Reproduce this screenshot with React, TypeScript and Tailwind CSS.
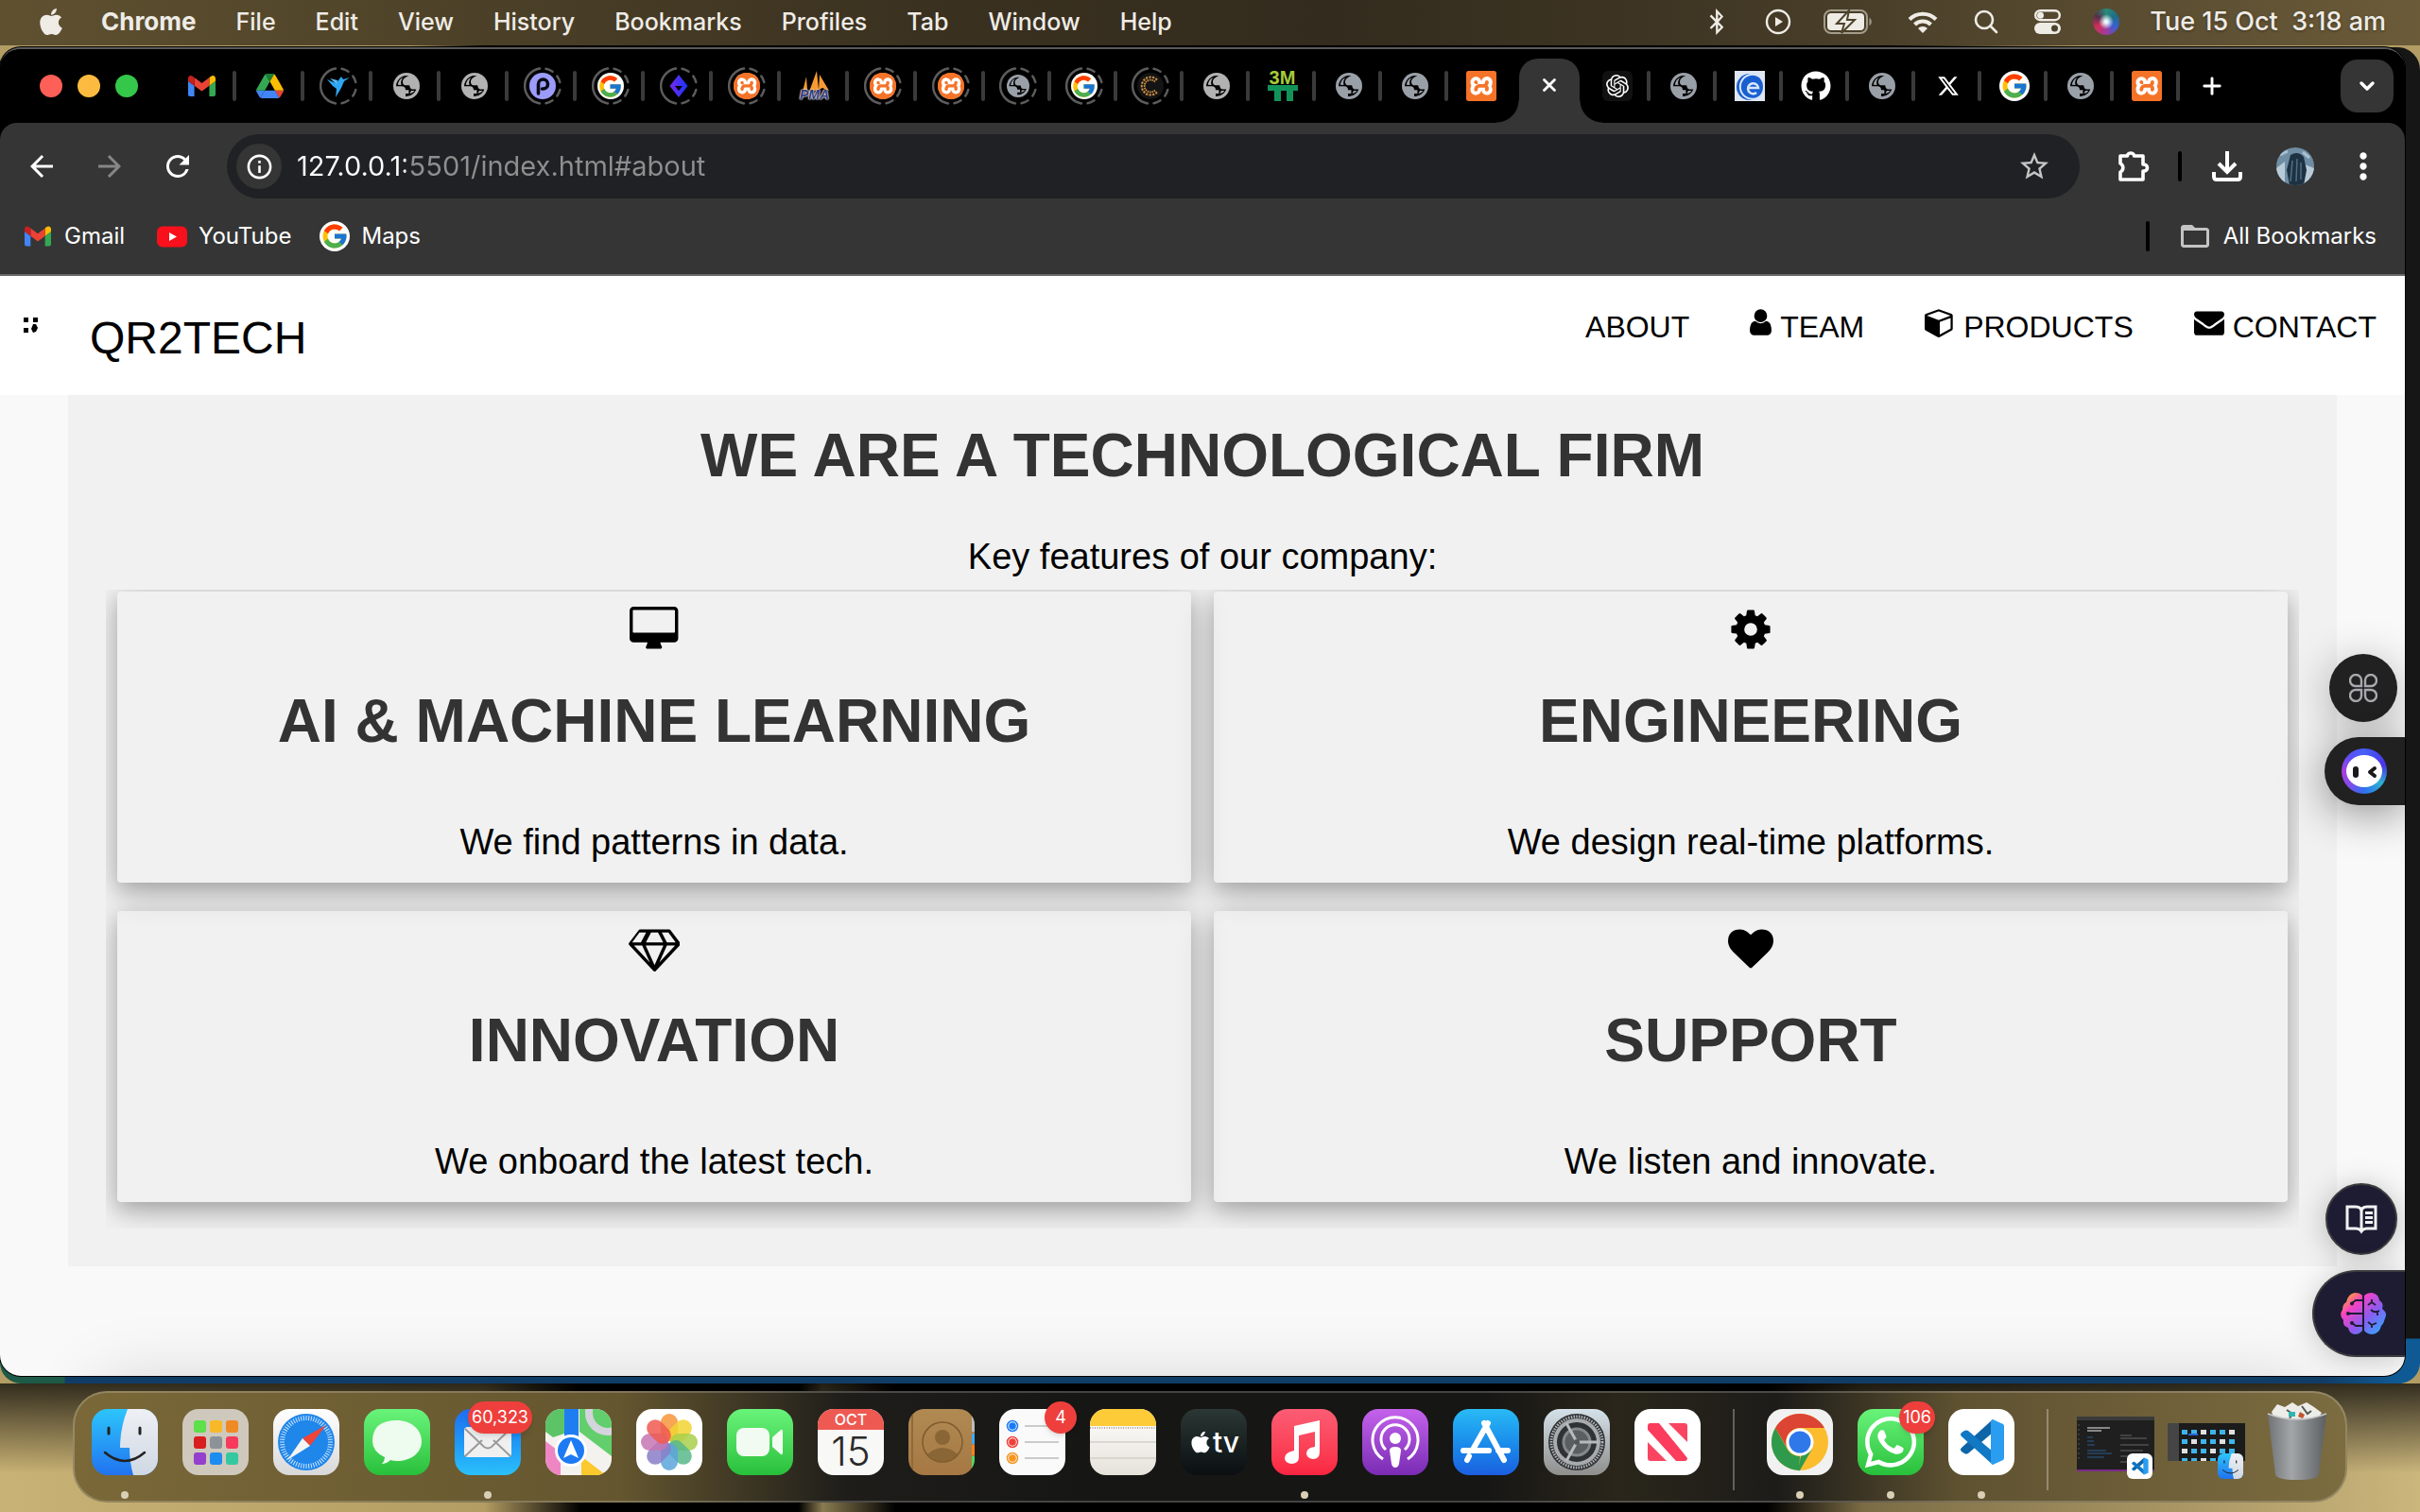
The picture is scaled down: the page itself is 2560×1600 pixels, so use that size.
import type { ReactNode } from "react";
import { FaApple, FaBluetoothB, FaGithub, FaWhatsapp, FaXTwitter } from "react-icons/fa6";
import { FcGoogle } from "react-icons/fc";
import { SiOpenai, SiXampp } from "react-icons/si";
import {
  MdArrowBack,
  MdArrowForward,
  MdInfoOutline,
  MdMoreVert,
  MdFolderOpen,
  MdRefresh,
  MdStarBorder,
} from "react-icons/md";
import { ChevronDown, Plus, X } from "lucide-react";

/* ---------- Brand marks ---------- */

function GmailMark({ className }: { className: string }) {
  return (
    <svg viewBox="52 42 88 66" className={className} aria-hidden="true">
      <path fill="#4285f4" d="M58 108h14V74L52 59v43c0 3.32 2.69 6 6 6" />
      <path fill="#34a853" d="M120 108h14c3.32 0 6-2.69 6-6V59l-20 15" />
      <path fill="#fbbc04" d="M120 48v26l20-15v-8c0-7.42-8.47-11.65-14.4-7.2" />
      <path fill="#ea4335" d="M72 74V48l24 18 24-18v26L96 92" />
      <path fill="#c5221f" d="M52 51v8l20 15V48l-5.6-4.2c-5.94-4.45-14.4-.22-14.4 7.2" />
    </svg>
  );
}

function DriveMark() {
  return (
    <svg viewBox="0 0 87.3 78" className="w-[29px] h-[26px]" aria-hidden="true">
      <path d="m6.6 66.85 3.85 6.65c.8 1.4 1.95 2.5 3.3 3.3l13.75-23.8h-27.5c0 1.55.4 3.1 1.2 4.5z" fill="#4285f4" />
      <path d="m43.65 25-13.75-23.8c-1.35.8-2.5 1.9-3.3 3.3l-25.4 44a9.06 9.06 0 0 0 -1.2 4.5h27.5z" fill="#34a853" />
      <path d="m73.55 76.8c1.35-.8 2.5-1.9 3.3-3.3l1.6-2.75 7.65-13.25c.8-1.4 1.2-2.95 1.2-4.5h-27.502l5.852 11.5z" fill="#ea4335" />
      <path d="m43.65 25 13.75-23.8c-1.35-.8-2.9-1.2-4.5-1.2h-18.5c-1.6 0-3.15.45-4.5 1.2z" fill="#188038" />
      <path d="m59.8 53h-32.3l-13.75 23.8c1.35.8 2.9 1.2 4.5 1.2h50.8c1.6 0 3.15-.45 4.5-1.2z" fill="#4285f4" />
      <path d="m73.4 26.5-12.7-22c-.8-1.4-1.95-2.5-3.3-3.3l-13.75 23.8 16.15 28h27.45c0-1.55-.4-3.1-1.2-4.5z" fill="#fbbc04" />
    </svg>
  );
}

function Globe({ tone, small }: { tone: "gray" | "blue"; small?: boolean }) {
  const fill = tone === "gray" ? "#b2b2b2" : "#9aa0a8";
  return (
    <svg viewBox="0 0 28 28" className={small ? "size-6" : "size-7"} aria-hidden="true">
      <circle cx="14" cy="14" r="14" fill={fill} />
      <path
        d="M16.500 3.200c-3.500 1-6.500 3.200-6.500 6.500 0 2.600 1.600 3.600 4 3.600h3.200c.3 2.600 1.200 4.200 3.300 4.200h3.800c-1.600 4.500-6 7.600-11.300 7.400v-3h3.400v-3.600h-3.400c0-2.600-1.400-4-4-4H3c.2-5.500 4.500-10.500 10-11.200z"
        fill="#000"
      />
      <path d="M10.500 5c-3.300 1.400-5.300 4.200-5.700 7.700l3.700.2C7.600 9.800 8.300 7.300 10.500 5z" fill={fill} />
      <path d="M17.500 21.800c2 0 3.800-1.300 4.800-2.900h-3.300z" fill={fill} />
    </svg>
  );
}

function GoogleDisc({ big }: { big?: boolean }) {
  return (
    <span className={big ? "flex size-8 items-center justify-center rounded-full bg-white" : "flex size-7 items-center justify-center rounded-full bg-white"}>
      <FcGoogle className={big ? "size-[30px]" : "size-[27px]"} />
    </span>
  );
}

function Xampp({ round }: { round?: boolean }) {
  return (
    <span className={round ? "flex size-7 items-center justify-center overflow-hidden rounded-full bg-[#f57328]" : "flex size-8 items-center justify-center overflow-hidden rounded-[3px] bg-[#f57328]"}>
      <span className={round ? "flex size-6 items-center justify-center bg-white" : "flex size-[29px] items-center justify-center bg-white"}>
        <SiXampp className={round ? "size-7 shrink-0 text-[#f57328]" : "size-8 shrink-0 text-[#f57328]"} />
      </span>
    </span>
  );
}

function Ring({ children }: { children: ReactNode }) {
  return (
    <span className="relative flex size-10 items-center justify-center">
      <svg viewBox="0 0 40 40" className="absolute inset-0 size-10" fill="none" stroke="#5c5c5c" strokeWidth="2.500" strokeLinecap="round" aria-hidden="true">
        <path d="M17 1.600A18.600 18.600 0 0 0 17 38.400" />
        <path d="M23.500 1.800a18.600 18.600 0 0 1 7 2.900M35.300 9.500a18.600 18.600 0 0 1 3 6.500M38.300 24a18.600 18.600 0 0 1-3 6.500M30.500 35.300a18.600 18.600 0 0 1-7 2.900" />
      </svg>
      {children}
    </span>
  );
}

function Bird() {
  return (
    <svg viewBox="0 0 28 28" className="size-7" fill="#2ea6f2" aria-hidden="true">
      <path d="M2 7l9 4 3-3 3-4 2 3 7-2-6 4-3 7-6 10 1-9-4-3z" />
      <path d="M5 6l8 2-1 4z" fill="#5cc0ff" />
    </svg>
  );
}

function LetterP() {
  return (
    <svg viewBox="0 0 28 28" className="size-7" aria-hidden="true">
      <circle cx="14" cy="14" r="14" fill="#9b9cfa" />
      <path d="M9.500 22V12a5 5 0 1 1 5 5h-1" fill="none" stroke="#0a0a14" strokeWidth="3.600" strokeLinecap="round" />
    </svg>
  );
}

function DiamondMark() {
  return (
    <svg viewBox="0 0 28 28" className="size-7" aria-hidden="true">
      <defs>
        <linearGradient id="dia">
          <stop offset="0" stopColor="#7a28e8" />
          <stop offset="1" stopColor="#1238ff" />
        </linearGradient>
      </defs>
      <path d="M14 2l9.500 12L14 26 4.500 14z" fill="url(#dia)" />
      <path d="M10 14h8l-4 5z" fill="#000" />
    </svg>
  );
}

function Pma() {
  return (
    <span className="relative flex size-8 items-end justify-center">
      <svg viewBox="0 0 32 32" className="absolute inset-0 size-8" fill="#f79a33" aria-hidden="true">
        <path d="M3 22L7 6l1 14zM10 22L18 0l2 20zM20 20L21 4l10 17-7-3z" />
      </svg>
      <span className="relative font-['Liberation_Sans'] text-[14px] leading-[13px] font-bold text-[#34397a] italic [text-shadow:0_0_1px_#ddd,0_0_1px_#ddd,0_0_2px_#ddd,0_0_2px_#ddd]">PMA</span>
    </span>
  );
}

function GoldC() {
  return (
    <svg viewBox="0 0 28 28" className="size-7" aria-hidden="true">
      <circle cx="14" cy="14" r="14" fill="#141414" />
      <path d="M20 8.500a8 8 0 1 0 0 11" fill="none" stroke="#c98d45" strokeWidth="5" strokeDasharray="2 1" />
      <path d="M20 8.500a8 8 0 1 0 0 11" fill="none" stroke="#141414" strokeWidth="1" />
    </svg>
  );
}

function ThreeMtt() {
  return (
    <span className="flex flex-col items-center font-['Liberation_Sans'] text-[20px] leading-[15px] font-bold">
      <span className="text-[#a5cd39]">3M</span>
      <svg viewBox="0 0 32 17" className="h-[17px] w-8" aria-hidden="true">
        <path d="M0 0h32v6h-5v11h-7V6h-6v11H7V6H0z" fill="#12935a" />
      </svg>
    </span>
  );
}

function BlueE() {
  return (
    <svg viewBox="0 0 32 32" className="size-8" aria-hidden="true">
      <rect width="32" height="32" fill="#dfe7f2" />
      <circle cx="16" cy="17" r="14" fill="#1a5fd0" />
      <path d="M26 6a13 13 0 1 0 3 19" fill="none" stroke="#d6e5fb" strokeWidth="2" />
      <path d="M14 18h11a5.500 5.500 0 1 0-2 5" fill="none" stroke="#d6e5fb" strokeWidth="2.500" />
    </svg>
  );
}

const openTabs: { name: string; icon: ReactNode }[] = [
  { name: "Gmail", icon: <GmailMark className="h-[22px] w-[29px]" /> },
  { name: "Drive", icon: <DriveMark /> },
  { name: "Bird", icon: <Ring><Bird /></Ring> },
  { name: "Site 1", icon: <Globe tone="gray" /> },
  { name: "Site 2", icon: <Globe tone="gray" /> },
  { name: "P", icon: <Ring><LetterP /></Ring> },
  { name: "Google", icon: <Ring><GoogleDisc /></Ring> },
  { name: "Diamond", icon: <Ring><DiamondMark /></Ring> },
  { name: "Xampp", icon: <Ring><Xampp round /></Ring> },
  { name: "phpMyAdmin", icon: <Pma /> },
  { name: "Xampp 2", icon: <Ring><Xampp round /></Ring> },
  { name: "Xampp 3", icon: <Ring><Xampp round /></Ring> },
];

const middleTabs: { name: string; icon: ReactNode }[] = [
  { name: "Site 3", icon: <Ring><Globe tone="blue" small /></Ring> },
  { name: "Google 2", icon: <Ring><GoogleDisc /></Ring> },
  { name: "C", icon: <Ring><GoldC /></Ring> },
  { name: "Site 4", icon: <Globe tone="gray" /> },
  { name: "3MTT", icon: <ThreeMtt /> },
  { name: "Site 5", icon: <Globe tone="blue" /> },
  { name: "Site 6", icon: <Globe tone="blue" /> },
  { name: "Xampp 4", icon: <Xampp /> },
];

const lastTabs: { name: string; icon: ReactNode }[] = [
  { name: "ChatGPT", icon: <span className="flex size-8 items-center justify-center rounded-md bg-[#111]"><SiOpenai className="size-6 text-white" /></span> },
  { name: "Site 7", icon: <Globe tone="blue" /> },
  { name: "E", icon: <BlueE /> },
  { name: "GitHub", icon: <FaGithub className="size-8 text-white" /> },
  { name: "Site 8", icon: <Globe tone="blue" /> },
  { name: "X", icon: <FaXTwitter className="size-6 text-white" /> },
  { name: "Google 3", icon: <GoogleDisc big /> },
  { name: "Site 9", icon: <Globe tone="blue" /> },
  { name: "Xampp 5", icon: <Xampp /> },
];

function Tab({ name, icon, wide, divider = true }: { name: string; icon: ReactNode; wide?: boolean; divider?: boolean }) {
  return (
    <div className={wide ? "flex w-[72px] items-center" : "flex w-[70px] items-center"}>
      <button type="button" aria-label={name} className="ml-[3px] flex h-10 flex-1 items-center justify-center">
        {icon}
      </button>
      <span className={divider ? "h-8 w-1 rounded-full bg-[#3a3a3a]" : "h-8 w-1"} />
    </div>
  );
}

/* ---------- macOS menu bar ---------- */

const menus = ["File", "Edit", "View", "History", "Bookmarks", "Profiles", "Tab", "Window", "Help"];

function MenuBar() {
  return (
    <header className="flex h-12 items-center bg-[linear-gradient(to_right,#5f5130,#3a3120_38%,#332b1d_55%,#3f3624_70%,#6b5b39)] pr-9 pb-[2px] pl-[38px] text-[25px] leading-8 font-medium text-[#efece6] [text-shadow:0_1px_3px_rgba(0,0,0,0.4)]">
      <button type="button" aria-label="Apple menu" className="mr-[37px]">
        <FaApple className="size-8" />
      </button>
      <nav className="flex items-center gap-[42px]">
        <button type="button" className="text-[26px] font-bold">Chrome</button>
        {menus.map((m) => (
          <button type="button" key={m}>{m}</button>
        ))}
      </nav>
      <div className="ml-auto flex items-center">
        <FaBluetoothB className="mr-[37px] size-7" />
        <svg viewBox="0 0 28 28" className="mr-[34px] size-7" aria-hidden="true">
          <circle cx="14" cy="14" r="12" fill="none" stroke="currentColor" strokeWidth="2.400" />
          <path d="M11 9v10l8-5z" fill="currentColor" />
        </svg>
        <svg viewBox="0 0 52 26" className="mr-[37px] h-[26px] w-[52px]" aria-hidden="true">
          <rect x="1" y="1" width="45" height="24" rx="7" fill="none" stroke="#a39c8b" strokeWidth="2" />
          <rect x="4" y="4" width="39" height="18" rx="4" fill="currentColor" />
          <path d="M48.500 9c3 1 3 7 0 8z" fill="#a39c8b" />
          <path d="M27 1L14 15h8l-3 10 14-14h-8z" fill="currentColor" stroke="#4d432b" strokeWidth="2" />
        </svg>
        <svg viewBox="0 0 32 24" className="mr-[38px] h-6 w-8" fill="none" stroke="currentColor" strokeWidth="4" aria-hidden="true">
          <path d="M2 9.500a20 20 0 0 1 28 0M7.500 15a12 12 0 0 1 17 0" />
          <path d="M16 24l-5-5a7 7 0 0 1 10 0z" fill="currentColor" stroke="none" />
        </svg>
        <svg viewBox="0 0 26 26" className="mr-[38px] size-[26px]" fill="none" stroke="currentColor" strokeWidth="2.600" strokeLinecap="round" aria-hidden="true">
          <circle cx="11" cy="11" r="9" />
          <path d="M17.500 17.500L24 24" />
        </svg>
        <svg viewBox="0 0 28 26" className="mr-[34px] h-[26px] w-7" aria-hidden="true">
          <rect x="1.200" y="1.200" width="25.600" height="10" rx="5" fill="none" stroke="currentColor" strokeWidth="2.400" />
          <circle cx="6.500" cy="6.200" r="3.500" fill="currentColor" />
          <rect y="14" width="28" height="12" rx="6" fill="currentColor" />
          <circle cx="21.500" cy="20" r="3.500" fill="#4d432b" />
        </svg>
        <span className="mr-8 size-7 rounded-full bg-[radial-gradient(circle,#e8f4ff_8%,transparent_40%),conic-gradient(#2a8a78,#1d6d8a,#3a5fd0,#a03a9a,#d0305a,#54304a,#2a8a78)]" />
        <span className="text-[27px] whitespace-pre">Tue 15 Oct  3:18 am</span>
      </div>
    </header>
  );
}

/* ---------- Browser chrome ---------- */

function TabStrip() {
  return (
    <div className="flex h-[78px] items-center bg-black pr-3 pl-[42px]">
      <div className="mr-8 flex gap-4">
        <button type="button" aria-label="Close" className="size-6 rounded-full bg-[#fe5f57]" />
        <button type="button" aria-label="Minimize" className="size-6 rounded-full bg-[#fcbb40]" />
        <button type="button" aria-label="Zoom" className="size-6 rounded-full bg-[#34c749]" />
      </div>
      {openTabs.map((t) => <Tab key={t.name} {...t} wide />)}
      {middleTabs.map((t, i) => <Tab key={t.name} {...t} divider={i < 7} />)}
      <div className="relative mx-[5px] flex h-[68px] w-16 items-center justify-center self-end rounded-t-[20px] bg-[#353535] pb-3">
        <span className="absolute bottom-0 -left-6 size-6 bg-[radial-gradient(circle_at_0_0,#000_23px,#353535_24px)]" />
        <span className="absolute -right-6 bottom-0 size-6 bg-[radial-gradient(circle_at_100%_0,#000_23px,#353535_24px)]" />
        <button type="button" aria-label="Close tab">
          <X className="size-[22px] text-white" strokeWidth={3} />
        </button>
      </div>
      {lastTabs.map((t) => <Tab key={t.name} {...t} />)}
      <button type="button" aria-label="New tab" className="ml-5">
        <Plus className="size-7 text-white" strokeWidth={2.5} />
      </button>
      <button type="button" aria-label="Search tabs" className="ml-auto flex h-14 w-14 items-center justify-center rounded-[18px] bg-[#353535]">
        <ChevronDown className="size-6 text-white" strokeWidth={3.5} />
      </button>
    </div>
  );
}

function ToolButton({ label, children }: { label: string; children: ReactNode }) {
  return (
    <button type="button" aria-label={label} className="flex w-[72px] items-center justify-center">
      {children}
    </button>
  );
}

function Toolbar() {
  return (
    <div className="flex h-[92px] items-center bg-[#353535] px-2 text-white">
      <ToolButton label="Back"><MdArrowBack className="size-9" /></ToolButton>
      <ToolButton label="Forward"><MdArrowForward className="size-9 text-[#868686]" /></ToolButton>
      <ToolButton label="Reload"><MdRefresh className="size-9" /></ToolButton>
      <div className="ml-4 flex h-[68px] flex-1 items-center rounded-full bg-[#202124] pr-[30px] pl-[10px]">
        <button type="button" aria-label="Site information" className="flex size-12 items-center justify-center rounded-full bg-[#353535]">
          <MdInfoOutline className="size-[31px]" />
        </button>
        <input
          aria-label="Address"
          defaultValue="127.0.0.1:5501/index.html#about"
          className="ml-4 h-10 flex-1 bg-[linear-gradient(to_right,#ffffff_115px,#8f8f8f_115px)] bg-clip-text text-[29px] text-transparent outline-none"
        />
        <button type="button" aria-label="Bookmark this page">
          <MdStarBorder className="size-9 text-[#c4c4c4]" />
        </button>
      </div>
      <span className="w-5" />
      <ToolButton label="Extensions">
        <svg viewBox="0 0 36 36" className="size-9" fill="none" stroke="currentColor" strokeWidth="3.600" strokeLinejoin="round" aria-hidden="true">
          <path d="M5 7h7.500v-1a4 4 0 0 1 7 0v1H29v9h1a3.500 3.500 0 0 1 0 7h-1v9H5v-8a5 5 0 0 0 0-9z" />
        </svg>
      </ToolButton>
      <span className="mx-3 h-8 w-1 rounded-full bg-black" />
      <ToolButton label="Downloads">
        <svg viewBox="0 0 32 32" className="size-8" fill="none" stroke="currentColor" strokeWidth="4" aria-hidden="true">
          <path d="M16 0v21M7 13l9 9 9-9M2 22v5q0 3 3 3h22q3 0 3-3v-5" />
        </svg>
      </ToolButton>
      <ToolButton label="Profile">
        <svg viewBox="0 0 40 40" className="size-10 rounded-full" aria-hidden="true">
          <rect width="40" height="40" fill="#6f8da3" />
          <path d="M0 22l9-7v25H0zM30 18l10 4v18H28z" fill="#b9cbd8" />
          <path d="M15 8q8-5 14 2l3 14-3 16H14l-3-16z" fill="#1d3242" />
          <path d="M17 14l-2 22M22 12l-1 24M26 16v18" stroke="#4f6f86" strokeWidth="1.500" />
          <path d="M4 8l8-4M28 5l7 6" stroke="#a9c0d0" strokeWidth="3" />
        </svg>
      </ToolButton>
      <ToolButton label="Menu"><MdMoreVert className="size-11" /></ToolButton>
    </div>
  );
}

function BookmarksBar() {
  return (
    <div className="flex h-[70px] items-center border-b-2 border-[#696767] bg-[#353535] pr-[30px] pb-3 pl-[26px] text-[24px] leading-8 text-white">
      <a href="#gmail" className="mr-[34px] flex items-center gap-[14px]">
        <GmailMark className="h-[22px] w-7" />
        Gmail
      </a>
      <a href="#youtube" className="mr-[30px] flex items-center gap-3">
        <svg viewBox="0 0 32 22" className="h-[23px] w-8" aria-hidden="true">
          <rect width="32" height="22" rx="6" fill="#f8101c" />
          <path d="M13 6.500v9l8-4.500z" fill="#fff" />
        </svg>
        YouTube
      </a>
      <a href="#maps" className="flex items-center gap-3">
        <GoogleDisc big />
        Maps
      </a>
      <span className="ml-auto h-8 w-1 rounded-full bg-black" />
      <a href="#all" className="ml-[30px] flex items-center gap-3">
        <MdFolderOpen className="size-9 text-[#c4c4c4]" />
        All Bookmarks
      </a>
    </div>
  );
}

/* ---------- Page ---------- */

const paths = {
  user: "M1536 1399q0 109-62.500 187t-150.500 78h-854q-88 0-150.500-78t-62.500-187q0-85 8.500-160.500t31.500-152 58.500-131 94-89 134.500-34.500q131 128 313 128t313-128q76 0 134.500 34.500t94 89 58.500 131 31.500 152 8.500 160.500zm-256-887q0 159-112.500 271.500t-271.500 112.500-271.500-112.500-112.500-271.500 112.500-271.500 271.500-112.500 271.500 112.500 112.500 271.500z",
  cube: "M896 1629l640-349v-636l-640 233v752zm-64-865l698-254-698-254-698 254zm832-252v768q0 35-18 65t-49 47l-704 384q-28 16-61 16t-61-16l-704-384q-31-17-49-47t-18-65v-768q0-40 23-73t61-47l704-256q22-8 44-8t44 8l704 256q38 14 61 47t23 73z",
  envelope: "M1792 710v794q0 66-47 113t-113 47h-1472q-66 0-113-47t-47-113v-794q44 49 101 87 362 246 497 345 57 42 92.500 65.500t94.500 48 110 24.500h2q51 0 110-24.500t94.500-48 92.500-65.500q170-123 498-345 57-39 100-87zm0-294q0 79-49 151t-122 123q-376 261-468 325-10 7-42.500 31t-54 38.500-52 32.500-57.500 27-50 9h-2q-23 0-50-9t-57.500-27-52-32.500-54-38.500-42.500-31q-91-64-262-182.500t-205-142.500q-62-42-117-115.500t-55-136.500q0-78 41.500-130t118.500-52h1472q65 0 112.500 47t47.500 113z",
  desktop: "M1728 992v-832q0-13-9.500-22.500t-22.500-9.500h-1600q-13 0-22.500 9.500t-9.500 22.500v832q0 13 9.500 22.500t22.500 9.500h1600q13 0 22.500-9.500t9.500-22.500zm128-832v1088q0 66-47 113t-113 47h-544q0 37 16 77.500t32 71 16 43.500q0 26-19 45t-45 19h-512q-26 0-45-19t-19-45q0-14 16-44t32-70 16-78h-544q-66 0-113-47t-47-113v-1088q0-66 47-113t113-47h1600q66 0 113 47t47 113z",
  cog: "M1152 896q0-106-75-181t-181-75-181 75-75 181 75 181 181 75 181-75 75-181zm512-109v222q0 12-8 23t-20 13l-185 28q-19 54-39 91 35 50 107 138 10 12 10 25t-9 23q-27 37-99 108t-94 71q-12 0-26-9l-138-108q-44 23-91 38-16 136-29 186-7 28-36 28h-222q-14 0-24.500-8.500t-11.500-21.500l-28-184q-49-16-90-37l-141 107q-10 9-25 9-14 0-25-11-126-114-165-168-7-10-7-23 0-12 8-23 15-21 51-66.500t54-70.500q-27-50-41-99l-183-27q-13-2-21-12.500t-8-23.500v-222q0-12 8-23t19-13l186-28q14-46 39-92-40-57-107-138-10-12-10-24 0-10 9-23 26-36 98.500-107.500t94.500-71.500q13 0 26 10l138 107q44-23 91-38 16-136 29-186 7-28 36-28h222q14 0 24.500 8.500t11.500 21.500l28 184q49 16 90 37l142-107q9-9 24-9 13 0 25 10 129 119 165 170 7 8 7 22 0 12-8 23-15 21-51 66.500t-54 70.500q26 50 41 98l183 28q13 2 21 12.500t8 23.500z",
  diamond: "M212 768l623 665-300-665h-323zm812 772l349-772h-698zm-538-900l204-384h-262l-288 384h346zm727 793l623-665h-323zm-530-793h682l-204-384h-274zm830 0h346l-288-384h-262zm141-486l384 512q14 18 13 41.500t-17 40.500l-960 1024q-18 20-47 20t-47-20l-960-1024q-16-17-17-40.500t13-41.500l384-512q18-26 51-26h1152q33 0 51 26z",
  heart: "M896 1664q-26 0-44-18l-624-602q-10-8-27.500-26t-55.500-65.500-68-97.500-53.500-121-23.500-138q0-220 127-344t351-124q62 0 126.500 21.500t120 58 95.500 68.500 76 68q36-36 76-68t95.500-68.500 120-58 126.500-21.500q224 0 351 124t127 344q0 221-229 450l-623 600q-18 18-44 18z",
};

function NavLink({ href, label, icon }: { href: string; label: string; icon?: ReactNode }) {
  return (
    <a href={href} className="flex items-baseline gap-[9px]">
      {icon}
      {label}
    </a>
  );
}

function SiteHeader() {
  return (
    <header className="flex h-[126px] items-start justify-between bg-white pr-[30px] pl-6 text-black">
      <a href="#home" className="flex items-start">
        <svg viewBox="0 0 18 18" className="mt-11 mr-[53px] size-[18px]" aria-hidden="true">
          <path d="M1 0h5v5H1zM11 0h5v5h-5zM1 11h5v5H1zM11 7h3l2 4-2 4-3 1-2-4z" />
        </svg>
        <span className="mt-9 text-[48px] leading-[60px]">QR2TECH</span>
      </a>
      <nav className="mt-[30px] flex gap-16 text-[32px] leading-[48px]">
        <NavLink href="#about" label="ABOUT" />
        <NavLink href="#team" label="TEAM" icon={<svg viewBox="256 0 1280 1792" className="h-8 w-[23px]" aria-hidden="true"><path d={paths.user} /></svg>} />
        <NavLink href="#products" label="PRODUCTS" icon={<svg viewBox="0 0 1792 1792" className="size-8" aria-hidden="true"><path d={paths.cube} /></svg>} />
        <NavLink href="#contact" label="CONTACT" icon={<svg viewBox="0 0 1792 1792" className="size-8" aria-hidden="true"><path d={paths.envelope} /></svg>} />
      </nav>
    </header>
  );
}

const features = [
  { title: "AI & MACHINE LEARNING", text: "We find patterns in data.", path: paths.desktop, box: "-64 0 1920 1792" },
  { title: "ENGINEERING", text: "We design real-time platforms.", path: paths.cog, box: "0 0 1792 1792" },
  { title: "INNOVATION", text: "We onboard the latest tech.", path: paths.diamond, box: "0 0 2048 1792" },
  { title: "SUPPORT", text: "We listen and innovate.", path: paths.heart, box: "0 0 1792 1792" },
];

function About() {
  return (
    <section id="about" className="mx-[72px] bg-[#f1f1f1] px-10 pt-4 pb-10 text-center text-[38px] leading-[57px] text-black">
      <h2 className="text-[64px] leading-[96px] font-bold text-[#333333]">WE ARE A TECHNOLOGICAL FIRM</h2>
      <p className="mt-[31px] mb-[6px]">Key features of our company:</p>
      <div className="grid grid-cols-2 gap-x-6 gap-y-[30px] overflow-hidden px-3 pt-[2px] pb-7">
        {features.map((f) => (
          <article key={f.title} className="rounded-sm pt-4 pb-[14px] shadow-[0_8px_20px_0_rgba(0,0,0,0.2),0_8px_40px_0_rgba(0,0,0,0.19)]">
            <svg viewBox={f.box} className="mx-auto h-12" aria-hidden="true">
              <path d={f.path} />
            </svg>
            <h3 className="mt-[25px] text-[64px] leading-[96px] font-bold text-[#333333]">{f.title}</h3>
            <p className="mt-[52px]">{f.text}</p>
          </article>
        ))}
      </div>
    </section>
  );
}

function SideWidgets() {
  return (
    <>
      <div className="absolute top-[400px] right-0 flex flex-col items-end gap-4">
        <button type="button" aria-label="Apps" className="mr-2 flex size-[72px] items-center justify-center rounded-full bg-[#212121] shadow-[0_8px_48px_rgba(0,0,0,0.3)]">
          <svg viewBox="0 0 30 30" className="size-[30px]" fill="none" stroke="#a9a9b0" strokeWidth="2.400" aria-hidden="true">
            <path d="M13 13H7.500A6 6 0 1 1 13 7.500zM17 13V7.500A6 6 0 1 1 22.500 13zM13 17v5.500A6 6 0 1 1 7.500 17zM17 17h5.500A6 6 0 1 1 17 22.500z" />
          </svg>
        </button>
        <button type="button" aria-label="Assistant" className="flex h-[72px] w-[85px] items-center rounded-l-full bg-[#212121] pl-[18px] shadow-[0_8px_48px_rgba(0,0,0,0.45)]">
          <span className="flex size-12 items-center justify-center rounded-full bg-[conic-gradient(#4560f8,#4b34e8_20%,#2bb0d0_35%,#2f6ff0_50%,#8a48e8_65%,#a93fe0_75%,#5a50f8_88%,#4560f8)]">
            <svg viewBox="0 0 38 34" className="h-[34px] w-[38px]" aria-hidden="true">
              <ellipse cx="19" cy="17" rx="19" ry="17" fill="#fff" />
              <rect x="7" y="12" width="6" height="12" rx="3" fill="#1a1a1a" />
              <path d="M30 14l-5 4 5 4" fill="none" stroke="#1a1a1a" strokeWidth="4" strokeLinecap="round" strokeLinejoin="round" />
            </svg>
          </span>
        </button>
      </div>
      <div className="absolute right-0 bottom-5 flex flex-col items-end gap-4">
        <button type="button" aria-label="Reader" className="mr-2 flex size-[76px] items-center justify-center rounded-full border-2 border-[#3c3b3e] bg-[#1d1c33] shadow-[0_4px_32px_rgba(0,0,0,0.25)]">
          <svg viewBox="0 0 34 32" className="h-8 w-[34px]" fill="none" stroke="#f2f2f4" strokeWidth="3" aria-hidden="true">
            <path d="M2 3h9q6 0 6 5 0-5 6-5h9v23h-9q-4 0-6 3-2-3-6-3H2zM17 8v20M21 9.500h8M21 14.500h8M21 19.500h8" />
          </svg>
        </button>
        <button type="button" aria-label="AI tools" className="flex h-[92px] w-[98px] items-center rounded-l-full border-2 border-r-0 border-[#3c3b3e] bg-[#1d1c33] pl-7 shadow-[0_4px_32px_rgba(0,0,0,0.2)]">
          <svg viewBox="0 0 48 44" className="h-11 w-12" aria-hidden="true">
            <defs>
              <linearGradient id="brain" x1="0" y1="0" x2="1" y2="1">
                <stop offset="0.100" stopColor="#ff9a3c" />
                <stop offset="0.300" stopColor="#f542c5" />
                <stop offset="0.600" stopColor="#8a5cf0" />
                <stop offset="0.900" stopColor="#3aa0ff" />
              </linearGradient>
            </defs>
            <path
              d="M23 3v37q-3 4-8 4-6-1-7-7-6-2-5-8-5-5-1-11 0-6 4-8Q8 1 15 0q6 0 8 3zM25 3q3-3 8-3 7 1 8 8 5 3 3 9 6 4 3 10-1 5-4 8-2 8-9 9-6 0-9-4z"
              fill="url(#brain)"
            />
            <path d="M23 8h-7l-4 3M23 22H8M23 35h-7l-4-3M29 13l4-3 4 3M33 10V7M32 18q4 4 9 1M39 20v4M29 31l4 3 5-2M33 34v3" fill="none" stroke="#1d1c33" strokeWidth="1.800" />
            <circle cx="12" cy="11.500" r="2" fill="#1d1c33" />
            <circle cx="8" cy="22" r="2" fill="#1d1c33" />
            <circle cx="12" cy="32" r="2" fill="#1d1c33" />
          </svg>
        </button>
      </div>
    </>
  );
}

/* ---------- Dock icons ---------- */

function FinderFace({ className }: { className: string }) {
  return (
    <svg viewBox="0 0 70 70" className={className} aria-hidden="true">
      <defs>
        <linearGradient id="fb" x2="0" y2="1"><stop stopColor="#2cc5fb" /><stop offset="1" stopColor="#2173f0" /></linearGradient>
        <linearGradient id="fw" x2="0" y2="1"><stop stopColor="#eef0f4" /><stop offset="1" stopColor="#cfd8e4" /></linearGradient>
      </defs>
      <rect width="70" height="70" fill="url(#fb)" />
      <path d="M38 0Q30 20 30 41h10q0 15 4 29h26V0z" fill="url(#fw)" />
      <path d="M18 20v6M51 20v6" stroke="#222" strokeWidth="3" strokeLinecap="round" />
      <path d="M14 46q21 18 42 0" fill="none" stroke="#222" strokeWidth="2.500" strokeLinecap="round" />
    </svg>
  );
}

function VsCodeMark({ className }: { className: string }) {
  return (
    <svg viewBox="0 0 50 50" className={className} aria-hidden="true">
      <path d="M37 1L4 31q-2 2 0 4l3 2q2 1 4 0L37 15z" fill="#0d65a8" />
      <path d="M37 49L4 19q-2-2 0-4l3-2q2-1 4 0l26 22z" fill="#1178c4" />
      <path d="M37 1l11 5q1 1 1 2v34q0 1-1 2l-11 5-2-2V3z" fill="#2a9df0" />
    </svg>
  );
}

function Art({ children, bg }: { children?: ReactNode; bg: string }) {
  return (
    <svg viewBox="0 0 70 70" className={bg} aria-hidden="true">
      {children}
    </svg>
  );
}

const ticks = Array.from({ length: 60 }, (_, i) => i * 6);
const petals = ["#f7953a", "#f2d330", "#a9cf4a", "#58b88a", "#5aa5dc", "#8a7ec8", "#c676b4", "#ee5a50"];
const pads = ["#5de04a", "#f7b928", "#f08a24", "#d81e1e", "#8b9298", "#f73a5c", "#9440cc", "#1d8cf0", "#35c8a0"];

const safari = (
  <Art bg="size-full bg-linear-to-b from-white to-[#d8d8d8]">
    <circle cx="35" cy="35" r="30" fill="#1f86ea" />
    {ticks.map((a) => (
      <path key={a} d="M35 7v5" stroke="#cfe6ff" strokeWidth="1" transform={`rotate(${a} 35 35)`} />
    ))}
    <path d="M56 17L31 31l8 8z" fill="#f04438" />
    <path d="M15 54l16-23 8 8z" fill="#f4f4f4" />
  </Art>
);

const maps = (
  <Art bg="size-full bg-[#f3f2ee]">
    <path d="M0 0h20v26L8 30 0 24z" fill="#5cc466" />
    <path d="M36 0h34v50L36 24z" fill="#62cf6c" />
    <path d="M0 34l16 12v24H0z" fill="#ee86c4" />
    <path d="M38 50l26 20H38z" fill="#fbc92d" />
    <path d="M20 0h15v34H20z" fill="#1f7df2" />
    <circle cx="66" cy="4" r="20" fill="none" stroke="#d4d4dc" strokeWidth="8" />
    <circle cx="27" cy="44" r="17" fill="#fff" />
    <circle cx="27" cy="44" r="14" fill="#1d7af3" />
    <path d="M27 33l8 19-8-4-8 4z" fill="#fff" />
  </Art>
);

const chrome = (
  <Art bg="size-full bg-[#f1f1f1]">
    <circle cx="35" cy="35" r="30" fill="#fbbc2e" />
    <path d="M9 20A30 30 0 0 1 61 20H35A15 15 0 0 0 22 42z" fill="#dc4434" />
    <path d="M9 20l13 23a15 15 0 0 0 13 7l-1 15A30 30 0 0 1 9 20z" fill="#2f9a4c" />
    <path d="M48 42L35 65a3 3 0 0 1-2 0l3-15z" fill="#2f9a4c" />
    <circle cx="35" cy="35" r="14.500" fill="#fff" />
    <circle cx="35" cy="35" r="11.500" fill="#2f78ea" />
  </Art>
);

const podcasts = (
  <Art bg="size-full bg-linear-to-b from-[#c562ec] to-[#7a2bb4]">
    <g fill="none" stroke="#fff" strokeWidth="3">
      <path d="M22 53a24 24 0 1 1 26 0" />
      <path d="M25 43a15 15 0 1 1 20 0" />
    </g>
    <circle cx="35" cy="31" r="6" fill="#fff" />
    <path d="M29 44q0-4 6-4t6 4l-2 14q-1 4-4 4t-4-4z" fill="#fff" />
  </Art>
);

const settings = (
  <Art bg="size-full bg-linear-to-b from-[#d5e2ea] to-[#8f8f8d]">
    <circle cx="35" cy="35" r="30" fill="#2f3234" />
    <circle cx="35" cy="35" r="27" fill="none" stroke="#b0b3b5" strokeWidth="3" strokeDasharray="1.500 1.300" />
    <circle cx="35" cy="35" r="23" fill="none" stroke="#a8abad" strokeWidth="4" />
    <circle cx="35" cy="35" r="14" fill="#5b5e61" stroke="#85888b" strokeWidth="3" />
    <path d="M35 35h23M35 35L24 15M35 35L24 55" stroke="#b8bbbd" strokeWidth="3" />
    <circle cx="35" cy="35" r="3" fill="#54575a" />
  </Art>
);

type DockApp = { name: string; art: ReactNode; running?: boolean; badge?: string };

const mainApps: DockApp[] = [
  { name: "Finder", art: <FinderFace className="size-full" />, running: true },
  {
    name: "Launchpad",
    art: (
      <Art bg="size-full bg-[#cfc9bd]">
        {pads.map((c, i) => (
          <rect key={c} x={12 + (i % 3) * 17} y={12 + Math.floor(i / 3) * 17} width="13" height="13" rx="3" fill={c} />
        ))}
      </Art>
    ),
  },
  { name: "Safari", art: safari },
  {
    name: "Messages",
    art: (
      <Art bg="size-full bg-linear-to-b from-[#68f47a] to-[#26c03a]">
        <path d="M35 12c14 0 26 9 26 22S49 55 35 55q-4 0-7-1-4 4-9 4 3-3 3-7-13-6-13-17 0-22 26-22z" fill="#eefbef" />
      </Art>
    ),
  },
  {
    name: "Mail",
    running: true,
    badge: "60,323",
    art: (
      <Art bg="size-full bg-linear-to-b from-[#1f6cf0] to-[#2cc0fa]">
        <rect x="10" y="19" width="50" height="32" rx="4" fill="#f0f0f0" />
        <path d="M11 50l18-17M59 50L41 33M11 21l20 19q4 3 8 0l20-19" fill="none" stroke="#9a9a9a" strokeWidth="2" />
      </Art>
    ),
  },
  { name: "Maps", art: maps },
  {
    name: "Photos",
    art: (
      <Art bg="size-full bg-white">
        {petals.map((c, i) => (
          <rect key={c} x="26" y="5" width="18" height="29" rx="9" fill={c} opacity="0.850" transform={`rotate(${i * 45} 35 35)`} />
        ))}
      </Art>
    ),
  },
  {
    name: "FaceTime",
    art: (
      <Art bg="size-full bg-linear-to-b from-[#68f47a] to-[#26c03a]">
        <rect x="10" y="20" width="35" height="30" rx="8" fill="#f2fbf2" />
        <path d="M48 30l9-8q2-1 2 2v22q0 3-2 2l-9-8z" fill="#f2fbf2" />
      </Art>
    ),
  },
  {
    name: "Calendar",
    art: (
      <span className="flex size-full flex-col items-center bg-[#f8f8f6]">
        <span className="w-full bg-[#ee5a52] text-center text-[16px] leading-[22px] font-medium text-white">OCT</span>
        <span className="text-[42px] leading-[46px] font-light text-[#2a2a2a]">15</span>
      </span>
    ),
  },
  {
    name: "Contacts",
    art: (
      <Art bg="size-full bg-linear-to-b from-[#b08a52] to-[#a67843]">
        <path d="M67 8h3v16h-3z" fill="#bdbdbd" />
        <path d="M67 26h3v11h-3z" fill="#3fa9f5" />
        <path d="M67 38h3v11h-3z" fill="#f7821b" />
        <path d="M67 50h3v12h-3z" fill="#4cd964" />
        <circle cx="36" cy="35" r="21" fill="none" stroke="#7d5a2e" strokeWidth="1.500" />
        <circle cx="36" cy="30" r="8" fill="#8a6535" />
        <path d="M20 48q16-14 32 0-16 15-32 0z" fill="#8a6535" />
        <path d="M4 0v70" stroke="#8f6a3a" strokeWidth="2" />
      </Art>
    ),
  },
  {
    name: "Reminders",
    badge: "4",
    art: (
      <Art bg="size-full bg-[#fafafa]">
        {["#1a7cf5", "#f0403a", "#f7941d"].map((c, i) => (
          <g key={c}>
            <circle cx="14" cy={18 + i * 17} r="5.500" fill="none" stroke={c} strokeWidth="1.500" />
            <circle cx="14" cy={18 + i * 17} r="3.800" fill={c} />
            <path d={`M27 ${18 + i * 17}h36`} stroke="#bbb" strokeWidth="1.500" />
          </g>
        ))}
      </Art>
    ),
  },
  {
    name: "Notes",
    art: (
      <Art bg="size-full bg-linear-to-b from-white to-[#e6e2da]">
        <path d="M0 0h70v18H0z" fill="#fdcb37" />
        <path d="M0 20h70" stroke="#b0a998" strokeWidth="2" strokeDasharray="1 1.500" />
        <path d="M0 35h70M0 52h70" stroke="#d3d0c9" strokeWidth="1.500" />
      </Art>
    ),
  },
  {
    name: "TV",
    art: (
      <span className="flex size-full items-center justify-center bg-linear-to-b from-[#2b3835] to-[#0b0f12] text-[30px] leading-8 font-medium text-white">
        <FaApple className="size-[26px]" />
        tv
      </span>
    ),
  },
  {
    name: "Music",
    running: true,
    art: (
      <Art bg="size-full bg-linear-to-b from-[#fb5c74] to-[#fa2440]">
        <path d="M24 18l27-6v33q0 8-7 8-7-1-7-6 0-6 9-7V24l-17 4v23q0 7-8 7-7-1-7-6 0-6 10-8z" fill="#fff" />
      </Art>
    ),
  },
  { name: "Podcasts", art: podcasts },
  {
    name: "App Store",
    art: (
      <Art bg="size-full bg-linear-to-b from-[#2abaf5] to-[#1c5fe0]">
        <path d="M33 15l21 39M37 15L21 43M17 50l-2 4M11 44h27M48 44h10" stroke="#fff" strokeWidth="6" strokeLinecap="round" />
      </Art>
    ),
  },
  { name: "Settings", art: settings },
  {
    name: "News",
    art: (
      <Art bg="size-full bg-white">
        <path d="M14 18q0-3 3-3h9l30 37q0 3-3 3h-9L14 22z" fill="#fb3c5c" />
        <path d="M36 15h17q3 0 3 3v17zM14 35v17q0 3 3 3h17z" fill="#f94562" />
      </Art>
    ),
  },
];

const userApps: DockApp[] = [
  { name: "Google Chrome", art: chrome, running: true },
  {
    name: "WhatsApp",
    running: true,
    badge: "106",
    art: (
      <span className="flex size-full items-center justify-center bg-linear-to-b from-[#68f47a] to-[#26c03a]">
        <FaWhatsapp className="size-[62px] text-white" />
      </span>
    ),
  },
  {
    name: "Visual Studio Code",
    running: true,
    art: (
      <span className="flex size-full items-center justify-center bg-white">
        <VsCodeMark className="size-[50px]" />
      </span>
    ),
  },
];

function DockItem({ name, art, running, badge }: DockApp) {
  return (
    <div className="flex flex-col items-center">
      <button type="button" aria-label={name} className="relative size-[70px]">
        <span className="block size-full overflow-hidden rounded-[17px]">{art}</span>
        {badge && (
          <span className="absolute -top-2 -right-3 flex h-[34px] min-w-[34px] items-center justify-center rounded-full bg-[#ee3f3c] px-1 text-[18px] leading-6 text-white shadow-md">
            {badge}
          </span>
        )}
      </button>
      <span className={running ? "mt-[17px] size-2 rounded-full bg-[#d9cfb4]" : "mt-[17px] size-2"} />
    </div>
  );
}

function Separator() {
  return <span className="mx-[34px] h-[86px] w-[2px] bg-white/30" />;
}

function Dock() {
  return (
    <footer className="flex justify-center bg-[linear-gradient(to_bottom,rgba(0,0,0,0.75),transparent_70%),linear-gradient(to_right,#c9b275,#b49d62_20%,#000_24%,#000_33%,#8a7b50_34%,#000_37%,#000_73%,#7c6c45_77%,#cbb67c)] pt-2 pb-[10px]">
      <div className="flex h-[118px] items-start rounded-[36px] border-2 border-white/20 bg-[linear-gradient(to_right,#7a6838,#64562f_24%,#1e1d1a_34%,#161614_45%,#161614_62%,#2a261b_68%,#1d1c19_75%,#5f5231_83%,#7c6c40)] pt-[17px] pr-4 pl-[18px]">
        <div className="flex gap-[26px]">{mainApps.map((a) => <DockItem key={a.name} {...a} />)}</div>
        <Separator />
        <div className="flex gap-[26px]">{userApps.map((a) => <DockItem key={a.name} {...a} />)}</div>
        <Separator />
        <div className="-ml-1 flex items-start gap-[14px]">
          <button type="button" aria-label="Minimized editor window" className="relative flex h-[70px] w-[82px] items-start pt-2">
            <svg viewBox="0 0 82 58" className="h-[58px] w-[82px]" aria-hidden="true">
              <rect width="82" height="58" fill="#1f1f1f" />
              <path d="M0 0h82v4H0z" fill="#3a3a3a" />
              <path d="M0 56h82v2H0z" fill="#7a2a8a" />
              <path d="M11 12h24M11 15h15" stroke="#aaa" strokeWidth="1.500" />
              <path d="M11 22h6M11 26h7M11 30h8M11 36h20M11 39h26M11 43h18" stroke="#2a5c8c" strokeWidth="1" />
              <path d="M46 20h12M46 23h28M46 30h30M46 36h24M46 42h28M46 48h10" stroke="#666" strokeWidth="1" />
              <path d="M2 8v40" stroke="#444" strokeWidth="1.500" strokeDasharray="2 3" />
            </svg>
            <span className="absolute right-0.5 -bottom-1 flex size-[27px] items-center justify-center rounded-md bg-white">
              <VsCodeMark className="size-[19px]" />
            </span>
          </button>
          <button type="button" aria-label="Minimized Finder window" className="relative flex h-[70px] w-[82px] items-start pt-[15px]">
            <svg viewBox="0 0 82 40" className="h-10 w-[82px]" aria-hidden="true">
              <rect width="82" height="40" fill="#1b1b1b" />
              <path d="M0 0h12v40H0z" fill="#454545" />
              {[7, 17, 27, 37].map((y, r) =>
                [15, 25, 35, 45, 55, 65].map((x, c) => (
                  <rect key={`${x}-${y}`} x={x} y={y} width="6" height={r === 3 ? 3 : 5} fill={(c + r) % 3 === 2 ? "#e0e0e0" : "#3fb4ea"} />
                )),
              )}
              <path d="M22 12h10" stroke="#2a62d8" strokeWidth="2" />
            </svg>
            <FinderFace className="absolute right-0.5 -bottom-1 size-[27px] rounded-md" />
          </button>
          <button type="button" aria-label="Trash" className="-mt-[7px] ml-1.5 h-[84px] w-[70px]">
            <svg viewBox="0 0 70 84" className="h-[84px] w-[70px]" aria-hidden="true">
              <defs>
                <linearGradient id="can"><stop stopColor="#6f7375" /><stop offset="0.400" stopColor="#a3a6a8" /><stop offset="1" stopColor="#5b5f62" /></linearGradient>
              </defs>
              <path d="M8 10l6-8 8 3 8-5 6 4 9-4 8 5 8 6-6 10H12z" fill="#ecece8" />
              <path d="M24 8l6 4-3 5M40 4l6 8 4-3" fill="none" stroke="#555" strokeWidth="2" />
              <path d="M26 10h7v5h-7z" fill="#2fb5b0" />
              <path d="M38 10l5 3-2 4-5-2z" fill="#c0562e" />
              <path d="M4 12q31 12 62 0l-8 64q-1 6-23 6T12 76z" fill="url(#can)" />
              <path d="M4 12q31 12 62 0" fill="none" stroke="#c5c8ca" strokeWidth="1.500" />
            </svg>
          </button>
        </div>
      </div>
    </footer>
  );
}

/* ---------- Desktop ---------- */

export default function App() {
  return (
    <div className="flex min-h-screen flex-col bg-[linear-gradient(to_right,#b39d64_17%,#000_20%,#000_78%,#b39d64_86%)] font-['Inter',sans-serif]">
      <MenuBar />
      <div className="mt-[2px] flex flex-1 flex-col rounded-t-[24px] rounded-b-[22px] bg-[linear-gradient(to_bottom,#161616_1366px,transparent_1367px),linear-gradient(to_right,#1d5a47_68px,#103d66_69px,#103d66_96%,#0f5a94_99%)] pr-4 pb-2">
        <div className="flex flex-1 flex-col overflow-hidden rounded-[22px] border-t-2 border-[#5a5a5a] bg-black shadow-[0_0_0_1px_#000]">
          <TabStrip />
          <div className="overflow-hidden rounded-t-[18px]">
            <Toolbar />
          </div>
          <BookmarksBar />
          <main className="relative flex flex-1 flex-col overflow-hidden bg-[#f9f9f9] font-['Liberation_Sans',sans-serif]">
            <SiteHeader />
            <About />
            <div className="mx-[140px] mt-auto h-0 shadow-[0_40px_70px_36px_rgba(0,0,0,0.15)]" />
            <SideWidgets />
          </main>
        </div>
      </div>
      <Dock />
    </div>
  );
}
